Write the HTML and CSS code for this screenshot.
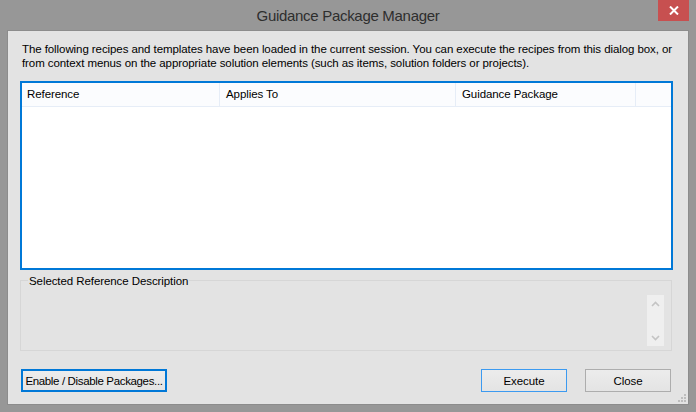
FILE: index.html
```html
<!DOCTYPE html>
<html>
<head>
<meta charset="utf-8">
<link rel="stylesheet" href="styles.css">
</head>
<body>
<div class="window">
  <div class="titlebar">
    <span class="title">Guidance Package Manager</span>
    <div class="close-x">
      <svg width="10" height="9" viewBox="0 0 10 9"><path d="M1 0.5 L9 8.5 M9 0.5 L1 8.5" stroke="#fff" stroke-width="2"/></svg>
    </div>
  </div>
  <div class="client">
    <p class="intro">The following recipes and templates have been loaded in the current session. You can execute the recipes from this dialog box, or<br>from context menus on the appropriate solution elements (such as items, solution folders or projects).</p>
    <div class="listbox">
      <div class="header">
        <div class="col c1">Reference</div>
        <div class="col c2">Applies To</div>
        <div class="col c3">Guidance Package</div>
        <div class="col c4"></div>
      </div>
    </div>
    <div class="group">
      <span class="group-label">Selected Reference Description</span>
      <div class="scroll">
        <svg width="9" height="6" viewBox="0 0 9 6"><path d="M1 5 L4.5 1.5 L8 5" fill="none" stroke="#c4c4c4" stroke-width="1.6"/></svg>
        <svg width="9" height="6" viewBox="0 0 9 6"><path d="M1 1 L4.5 4.5 L8 1" fill="none" stroke="#c4c4c4" stroke-width="1.6"/></svg>
      </div>
    </div>
    <div class="buttons">
      <button class="btn btn-focus">Enable / Disable Packages...</button>
      <div class="spacer"></div>
      <button class="btn btn-default">Execute</button>
      <button class="btn">Close</button>
    </div>
    <svg class="grip" width="8" height="8" viewBox="0 0 8 8">
      <rect x="6" y="0" width="2" height="2" fill="#bdbdbd"/>
      <rect x="3" y="3" width="2" height="2" fill="#bdbdbd"/>
      <rect x="6" y="3" width="2" height="2" fill="#bdbdbd"/>
      <rect x="0" y="6" width="2" height="2" fill="#bdbdbd"/>
      <rect x="3" y="6" width="2" height="2" fill="#bdbdbd"/>
      <rect x="6" y="6" width="2" height="2" fill="#bdbdbd"/>
    </svg>
  </div>
</div>
</body>
</html>
```
FILE: styles.css
```css
* { box-sizing: border-box; }
html, body { margin: 0; padding: 0; }
body {
  background: #979797;
  font-family: "Liberation Sans", Arial, sans-serif;
  font-size: 11.5px;
  letter-spacing: -0.08px;
  color: #000;
}
.window {
  width: 696px;
  height: 412px;
  display: flex;
  flex-direction: column;
}
.titlebar {
  height: 31px;
  position: relative;
  display: flex;
  align-items: center;
  justify-content: center;
}
.title {
  font-size: 15px;
  letter-spacing: -0.3px;
  color: #2e2e2e;
}
.close-x {
  position: absolute;
  top: 0;
  right: 7px;
  width: 31px;
  height: 21px;
  background: #c75050;
  display: flex;
  align-items: center;
  justify-content: center;
}
.client {
  position: relative;
  margin: 0 8px;
  height: 373px;
  background: #e3e3e3;
  box-shadow: 0 0 0 1px #8c8c8c;
  padding: 11px 15px 0 12px;
  display: flex;
  flex-direction: column;
}
.intro {
  margin: 0;
  padding-left: 2px;
  line-height: 14px;
  height: 28px;
  white-space: nowrap;
}
.listbox {
  margin-top: 11px;
  height: 189px;
  border: 2px solid #0078d7;
  background: #fff;
}
.header {
  display: flex;
  height: 24px;
  background: #fbfcfe;
  border-bottom: 1px solid #e6edf7;
}
.col {
  border-right: 1px solid #e6edf7;
  padding-left: 6px;
  line-height: 23px;
}
.c1 { width: 198px; padding-left: 5px; }
.c2 { width: 236px; }
.c3 { width: 180px; }
.c4 { flex: 1; border-right: none; }
.group {
  position: relative;
  margin-top: 10px;
  height: 71px;
  width: 652px;
  border: 1px solid #d6d6d6;
  display: flex;
  justify-content: flex-end;
  align-items: flex-end;
  padding: 0 7px 4px 0;
}
.group-label {
  position: absolute;
  top: -7px;
  left: 7px;
  padding: 0 1px;
  background: #e3e3e3;
  line-height: 14px;
}
.scroll {
  width: 17px;
  height: 51px;
  background: #efefef;
  display: flex;
  flex-direction: column;
  align-items: center;
  justify-content: space-between;
  padding: 6px 0 5px;
}
.scroll svg { display: block; }
.buttons {
  display: flex;
  margin-top: 18px;
  padding: 0 2px 0 1px;
}
.spacer { flex: 1; }
.btn {
  font-family: inherit;
  font-size: 11.5px;
  letter-spacing: -0.08px;
  white-space: nowrap;
  color: #000;
  height: 23px;
  width: 86px;
  background: linear-gradient(#ececec, #e4e4e4);
  border: 1px solid #adadad;
  padding: 0;
  margin: 0;
}
.btn-focus {
  width: 146px;
  border: 2px solid #0078d7;
  letter-spacing: -0.35px;
}
.btn-default {
  border-color: #3c9af0;
  margin-right: 18px;
}
.grip {
  position: absolute;
  right: 2px;
  bottom: 2px;
}
```
